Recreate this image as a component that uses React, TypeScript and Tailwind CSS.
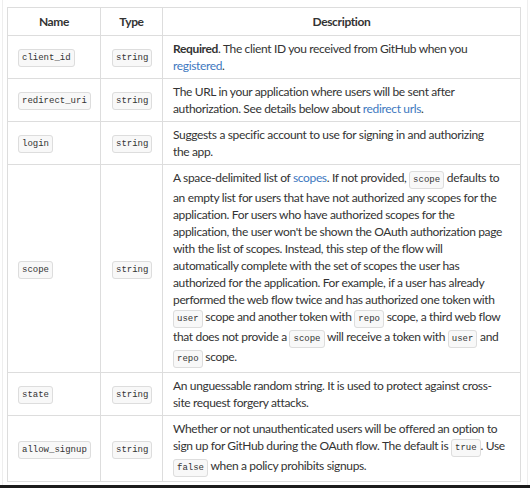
import React from "react";

const Code = ({ children }: { children: React.ReactNode }) => (
  <code className="rounded-[3px] border border-[#dddddd] bg-[#f8f8f8] px-[3px] py-[3px] font-['Liberation_Mono',monospace] text-[9px] tracking-normal text-[#333]">
    {children}
  </code>
);

const A = ({ children }: { children: React.ReactNode }) => (
  <span className="text-[#4078c0]">{children}</span>
);

const rows: { name: string; desc: React.ReactNode }[] = [
  {
    name: "client_id",
    desc: (
      <>
        <b className="font-bold">Required</b>. The client ID you received from GitHub when you
        <br />
        <A>registered</A>.
      </>
    ),
  },
  {
    name: "redirect_uri",
    desc: (
      <>
        The URL in your application where users will be sent after
        <br />
        authorization. See details below about <A>redirect urls</A>.
      </>
    ),
  },
  {
    name: "login",
    desc: (
      <>
        Suggests a specific account to use for signing in and authorizing
        <br />
        the app.
      </>
    ),
  },
  {
    name: "scope",
    desc: (
      <>
        A space-delimited list of <A>scopes</A>. If not provided, <Code>scope</Code> defaults to
        <br />
        an empty list for users that have not authorized any scopes for the
        <br />
        application. For users who have authorized scopes for the
        <br />
        application, the user won't be shown the OAuth authorization page
        <br />
        with the list of scopes. Instead, this step of the flow will
        <br />
        automatically complete with the set of scopes the user has
        <br />
        authorized for the application. For example, if a user has already
        <br />
        performed the web flow twice and has authorized one token with
        <br />
        <Code>user</Code> scope and another token with <Code>repo</Code> scope, a third web flow
        <br />
        that does not provide a <Code>scope</Code> will receive a token with <Code>user</Code> and
        <br />
        <Code>repo</Code> scope.
      </>
    ),
  },
  {
    name: "state",
    desc: (
      <>
        An unguessable random string. It is used to protect against cross-
        <br />
        site request forgery attacks.
      </>
    ),
  },
  {
    name: "allow_signup",
    desc: (
      <>
        Whether or not unauthenticated users will be offered an option to
        <br />
        sign up for GitHub during the OAuth flow. The default is <Code>true</Code>. Use
        <br />
        <Code>false</Code> when a policy prohibits signups.
      </>
    ),
  },
];

export default function App() {
  return (
    <div className="flex h-[488px] w-[530px] flex-col bg-white font-['Lato',sans-serif] text-[12px] tracking-[-0.35px] text-[#333]">
      <div className="ml-[2px] mr-[2px] flex-1 border-x border-[#eeeeee] pl-[4px] pt-[7px]">
        <table className="w-[514px] table-fixed border-collapse leading-[17px]">
          <colgroup>
            <col className="w-[93px]" />
            <col className="w-[62px]" />
            <col />
          </colgroup>
          <thead>
            <tr>
              <th className="border border-[#dddddd] px-[10px] py-[5px] font-bold">Name</th>
              <th className="border border-[#dddddd] px-[10px] py-[5px] font-bold">Type</th>
              <th className="border border-[#dddddd] px-[10px] py-[5px] font-bold">Description</th>
            </tr>
          </thead>
          <tbody>
            {rows.map((r) => (
              <tr key={r.name}>
                <td className="border border-[#dddddd] px-[10px] py-[4px]">
                  <Code>{r.name}</Code>
                </td>
                <td className="border border-[#dddddd] px-[11px] py-[4px]">
                  <Code>string</Code>
                </td>
                <td className="whitespace-nowrap border border-[#dddddd] py-[4px] pl-[10px] pr-[2px]">
                  {r.desc}
                </td>
              </tr>
            ))}
          </tbody>
        </table>
      </div>
      <div className="h-[3px] bg-[#1c1c1c]" />
    </div>
  );
}
